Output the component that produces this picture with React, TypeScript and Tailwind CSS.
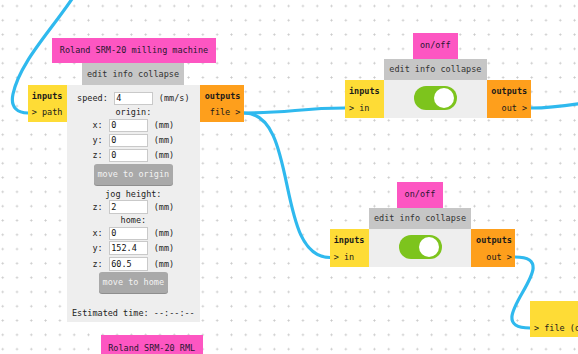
import React from "react";

const mono = "font-['DejaVu_Sans_Mono',monospace] text-[8.5px] leading-none";

function Field({ label, value, unit, h }: { label: string; value: string; unit: string; h: string }) {
  return (
    <div className={`flex items-center justify-center gap-[6px] ${h}`}>
      <span className="text-[#222]">{label}</span>
      <div className="w-[39px] h-[13.5px] bg-white border border-[#c9c9c9] flex items-center pl-[1.5px] text-[#111]">
        {value}
      </div>
      <span className="text-[#222]">{unit}</span>
    </div>
  );
}

function Btn({ children, w }: { children: React.ReactNode; w: string }) {
  return (
    <div className="flex justify-center">
      <div
        className={`${w} h-[21px] rounded-[3px] bg-[#a9a9a9] shadow-[0_1px_0_#8e8e8e] text-[#f3f3f3] flex items-center justify-center`}
      >
        {children}
      </div>
    </div>
  );
}

function Inputs({ label, w = "w-[39px]" }: { label: string; w?: string }) {
  return (
    <div className={`${w} h-[37.3px] bg-[#fedc36] pl-[4px] pt-[4px] shrink-0`}>
      <div className="h-[14px] flex items-center font-bold text-[#1a1a1a]">inputs</div>
      <div className="mt-[2px] h-[15px] flex items-center text-[#1a1a1a] whitespace-nowrap">{label}</div>
    </div>
  );
}

function Outputs({ label }: { label: string }) {
  return (
    <div className="w-[44px] h-[37.3px] bg-[#fe9f1c] pr-[3.5px] pt-[4px] shrink-0 flex flex-col items-end">
      <div className="h-[14px] flex items-center font-bold text-[#1a1a1a]">outputs</div>
      <div className="mt-[2px] h-[15px] flex items-center text-[#1a1a1a] whitespace-nowrap">{label}</div>
    </div>
  );
}

function Toggle() {
  return (
    <div className="w-[43px] h-[24.7px] rounded-full bg-[#7dc41d] relative">
      <div className="absolute right-[2.6px] top-[2.4px] w-[20px] h-[20px] rounded-full bg-white" />
    </div>
  );
}

function OnOff({ left, top }: { left: string; top: string }) {
  return (
    <div className={`absolute ${left} ${top} ${mono}`}>
      <div className="ml-[67.5px] w-[45.5px] h-[26px] bg-[#fd56c2] flex items-center justify-center text-[#2a1730]">
        on/off
      </div>
      <div className="ml-[39px] w-[102.7px] h-[21.7px] bg-[#c6c6c6] flex items-center justify-center text-[#333]">
        edit info collapse
      </div>
      <div className="flex">
        <Inputs label="> in" />
        <div className="w-[102.7px] h-[37.3px] bg-[#eeeeee] flex items-center justify-center pb-[2px]">
          <Toggle />
        </div>
        <Outputs label="out >" />
      </div>
    </div>
  );
}

function MainNode() {
  return (
    <div className={`absolute left-[27.7px] top-[37.7px] ${mono}`}>
      <div className="ml-[24.3px] w-[164px] h-[25.6px] bg-[#fd56c2] flex items-center justify-center text-[#2a1730]">
        Roland SRM-20 milling machine
      </div>
      <div className="ml-[54.3px] w-[102px] h-[21.7px] bg-[#c6c6c6] flex items-center justify-center text-[#333]">
        edit info collapse
      </div>
      <div className="flex items-start">
        <Inputs label="> path" />
        <div className="w-[133.3px] bg-[#eeeeee] flex flex-col pt-[6.5px] pb-[2.4px]">
          <Field label="speed:" value="4" unit="(mm/s)" h="h-[13.9px]" />
          <div className="h-[13.25px] flex items-center justify-center text-[#222]">origin:</div>
          <Field label="x:" value="0" unit="(mm)" h="h-[13.95px]" />
          <Field label="y:" value="0" unit="(mm)" h="h-[15.5px]" />
          <Field label="z:" value="0" unit="(mm)" h="h-[15.4px]" />
          <div className="h-[21.5px] flex items-center justify-center">
            <Btn w="w-[79px]">move to origin</Btn>
          </div>
          <div className="h-[15.35px] flex items-end justify-center pb-[2px] text-[#222]">jog height:</div>
          <Field label="z:" value="2" unit="(mm)" h="h-[13px]" />
          <div className="h-[13.15px] flex items-center justify-center text-[#222]">home:</div>
          <Field label="x:" value="0" unit="(mm)" h="h-[14px]" />
          <Field label="y:" value="152.4" unit="(mm)" h="h-[15.35px]" />
          <Field label="z:" value="60.5" unit="(mm)" h="h-[16.05px]" />
          <div className="h-[20.7px] flex items-center justify-center">
            <Btn w="w-[68.7px]">move to home</Btn>
          </div>
          <div className="h-[13.6px]" />
          <div className="h-[14px] flex items-center justify-center text-[#222] whitespace-nowrap">
            Estimated time: --:--:--
          </div>
        </div>
        <Outputs label="file >" />
      </div>
    </div>
  );
}

export default function App() {
  return (
    <div className="relative w-[578px] h-[354px] overflow-hidden bg-white bg-[radial-gradient(circle,#c9c9c9_0.8px,transparent_1.3px)] bg-size-[14.3px_14.3px] bg-position-[-4.45px_-1.15px]">
      <svg className="absolute left-0 top-0" width="578" height="354" viewBox="0 0 578 354" fill="none">
        <g stroke="#2fb9ee" strokeWidth="3.2" strokeLinecap="round" fill="none">
          <path d="M 74 -4 C 50 32, 20 62, 13 94 C 10 108, 18 113, 28 113" />
          <path d="M 244 113 C 290 113, 300 108, 345 108" />
          <path d="M 244 113 C 300 113, 274 257.5, 330 257.5" />
          <path d="M 531 108 C 565 108, 580 102, 610 100" />
          <path d="M 515 257 C 571 257, 474 328, 530 328" />
        </g>
      </svg>

      <MainNode />
      <OnOff left="left-[345px]" top="top-[32.7px]" />
      <OnOff left="left-[329.7px]" top="top-[181.7px]" />

      <div className={`absolute left-[100.7px] top-[335px] w-[102px] h-[26px] bg-[#fd56c2] flex items-center justify-center text-[#2a1730] ${mono}`}>
        Roland SRM-20 RML
      </div>

      <div className={`absolute left-[530px] top-[300.7px] w-[90px] h-[36.6px] bg-[#fedc36] pl-[4px] pt-[4px] ${mono}`}>
        <div className="h-[14px]" />
        <div className="mt-[2px] h-[15px] flex items-center text-[#1a1a1a] whitespace-nowrap">&gt; file (output)</div>
      </div>
    </div>
  );
}
